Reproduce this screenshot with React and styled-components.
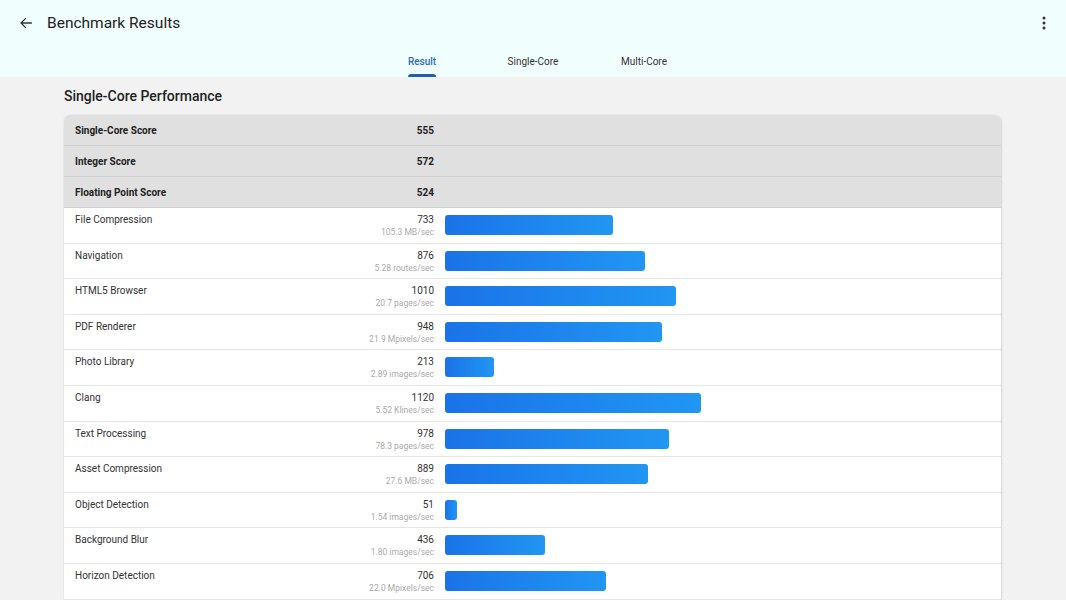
import React from 'react'
import styled, { createGlobalStyle } from 'styled-components'

const GlobalStyle = createGlobalStyle`
    html, body {
        margin: 0;
        padding: 0;
        background: #f2f2f2;
        font-family: Roboto, "Liberation Sans", sans-serif;
    }
`

const Header = styled.header`
    background: #f1fefe;
    height: 77px;
    display: flex;
    flex-direction: column;
`

const TopBar = styled.div`
    height: 46px;
    display: flex;
    align-items: center;
    padding: 0 14px 0 18px;
`

const IconButton = styled.button`
    border: 0;
    background: transparent;
    padding: 0;
    width: 16px;
    height: 16px;
    display: flex;
    align-items: center;
    justify-content: center;
    color: #333;
    cursor: pointer;
`

const Title = styled.h1`
    margin: 0 0 0 13px;
    font-size: 15.5px;
    font-weight: 400;
    color: #222;
    flex: 1;
`

const Tabs = styled.nav`
    flex: 1;
    display: flex;
    justify-content: center;
`

const Tab = styled.div`
    width: 111px;
    display: flex;
    flex-direction: column;
    align-items: center;
    justify-content: flex-end;
    font-size: 10px;
    font-weight: ${(p) => (p.$active ? 500 : 400)};
    color: ${(p) => (p.$active ? '#2a6cbf' : '#333')};
`

const TabLabel = styled.span`
    margin-bottom: 7px;
`

const Indicator = styled.span`
    width: 28px;
    height: 3px;
    border-radius: 3px 3px 0 0;
    background: ${(p) => (p.$active ? '#1f5fb0' : 'transparent')};
`

const Main = styled.main`
    padding: 10px 65px 0 64px;
`

const Heading = styled.h2`
    margin: 0 0 9px;
    font-size: 14px;
    font-weight: 500;
    color: #222;
    line-height: 19px;
`

const Card = styled.section`
    background: #fff;
    border-radius: 6px 6px 0 0;
    box-shadow: 0 0 2px rgba(0, 0, 0, 0.12), 1px 1px 2px rgba(0, 0, 0, 0.08);
    overflow: hidden;
`

const SummaryRow = styled.div`
    height: 31px;
    box-sizing: border-box;
    background: #e0e0e0;
    border-bottom: 1px solid #d0d0d0;
    display: grid;
    grid-template-columns: 370px 1fr;
    align-items: center;
    font-size: 10px;
    font-weight: 700;
    color: #222;
    &:last-child {
        border-bottom: 0;
    }
`

const Cell = styled.div`
    display: flex;
    justify-content: space-between;
    padding-left: 11px;
`

const DetailRow = styled.div`
    height: 35.6px;
    box-sizing: border-box;
    border-bottom: 1px solid #e6e6e6;
    display: grid;
    grid-template-columns: 370px 1fr;
    align-items: start;
`

const Label = styled.div`
    font-size: 10px;
    color: #333;
    padding-top: 6px;
`

const Values = styled.div`
    display: flex;
    flex-direction: column;
    align-items: flex-end;
    padding-top: 6px;
`

const Score = styled.span`
    font-size: 10px;
    color: #333;
    line-height: 12px;
`

const Rate = styled.span`
    font-size: 8.5px;
    color: #aaa;
    line-height: 12px;
`

const BarTrack = styled.div`
    padding: 7px 0 0 11px;
`

const Bar = styled.div`
    height: 20px;
    border-radius: 3px;
    background: linear-gradient(90deg, #1a73e8, #2196f3);
`

const summary = [
    ['Single-Core Score', 555],
    ['Integer Score', 572],
    ['Floating Point Score', 524],
]

const details = [
    ['File Compression', 733, '105.3 MB/sec'],
    ['Navigation', 876, '5.28 routes/sec'],
    ['HTML5 Browser', 1010, '20.7 pages/sec'],
    ['PDF Renderer', 948, '21.9 Mpixels/sec'],
    ['Photo Library', 213, '2.89 images/sec'],
    ['Clang', 1120, '5.52 Klines/sec'],
    ['Text Processing', 978, '78.3 pages/sec'],
    ['Asset Compression', 889, '27.6 MB/sec'],
    ['Object Detection', 51, '1.54 images/sec'],
    ['Background Blur', 436, '1.80 images/sec'],
    ['Horizon Detection', 706, '22.0 Mpixels/sec'],
]

const tabs = ['Result', 'Single-Core', 'Multi-Core']

export default function App() {
    return (
        <React.Fragment>
            <GlobalStyle />
            <Header>
                <TopBar>
                    <IconButton aria-label="back">
                        <svg width="14" height="14" viewBox="0 0 24 24" fill="none" stroke="#333" strokeWidth="2.2" strokeLinecap="square">
                            <path d="M21 12H4M11 4.5L3.5 12L11 19.5" />
                        </svg>
                    </IconButton>
                    <Title>Benchmark Results</Title>
                    <IconButton aria-label="more">
                        <svg width="4" height="14" viewBox="0 0 4 14" fill="#333">
                            <circle cx="2" cy="2" r="1.5" />
                            <circle cx="2" cy="7" r="1.5" />
                            <circle cx="2" cy="12" r="1.5" />
                        </svg>
                    </IconButton>
                </TopBar>
                <Tabs>
                    {tabs.map((t, i) => (
                        <Tab key={t} $active={i === 0}>
                            <TabLabel>{t}</TabLabel>
                            <Indicator $active={i === 0} />
                        </Tab>
                    ))}
                </Tabs>
            </Header>
            <Main>
                <Heading>Single-Core Performance</Heading>
                <Card>
                    {summary.map(([name, score]) => (
                        <SummaryRow key={name}>
                            <Cell>
                                <span>{name}</span>
                                <span>{score}</span>
                            </Cell>
                        </SummaryRow>
                    ))}
                    {details.map(([name, score, rate]) => (
                        <DetailRow key={name}>
                            <Cell>
                                <Label>{name}</Label>
                                <Values>
                                    <Score>{score}</Score>
                                    <Rate>{rate}</Rate>
                                </Values>
                            </Cell>
                            <BarTrack>
                                <Bar style={{ width: Math.max(11, score * 0.2286) }} />
                            </BarTrack>
                        </DetailRow>
                    ))}
                </Card>
            </Main>
        </React.Fragment>
    )
}
